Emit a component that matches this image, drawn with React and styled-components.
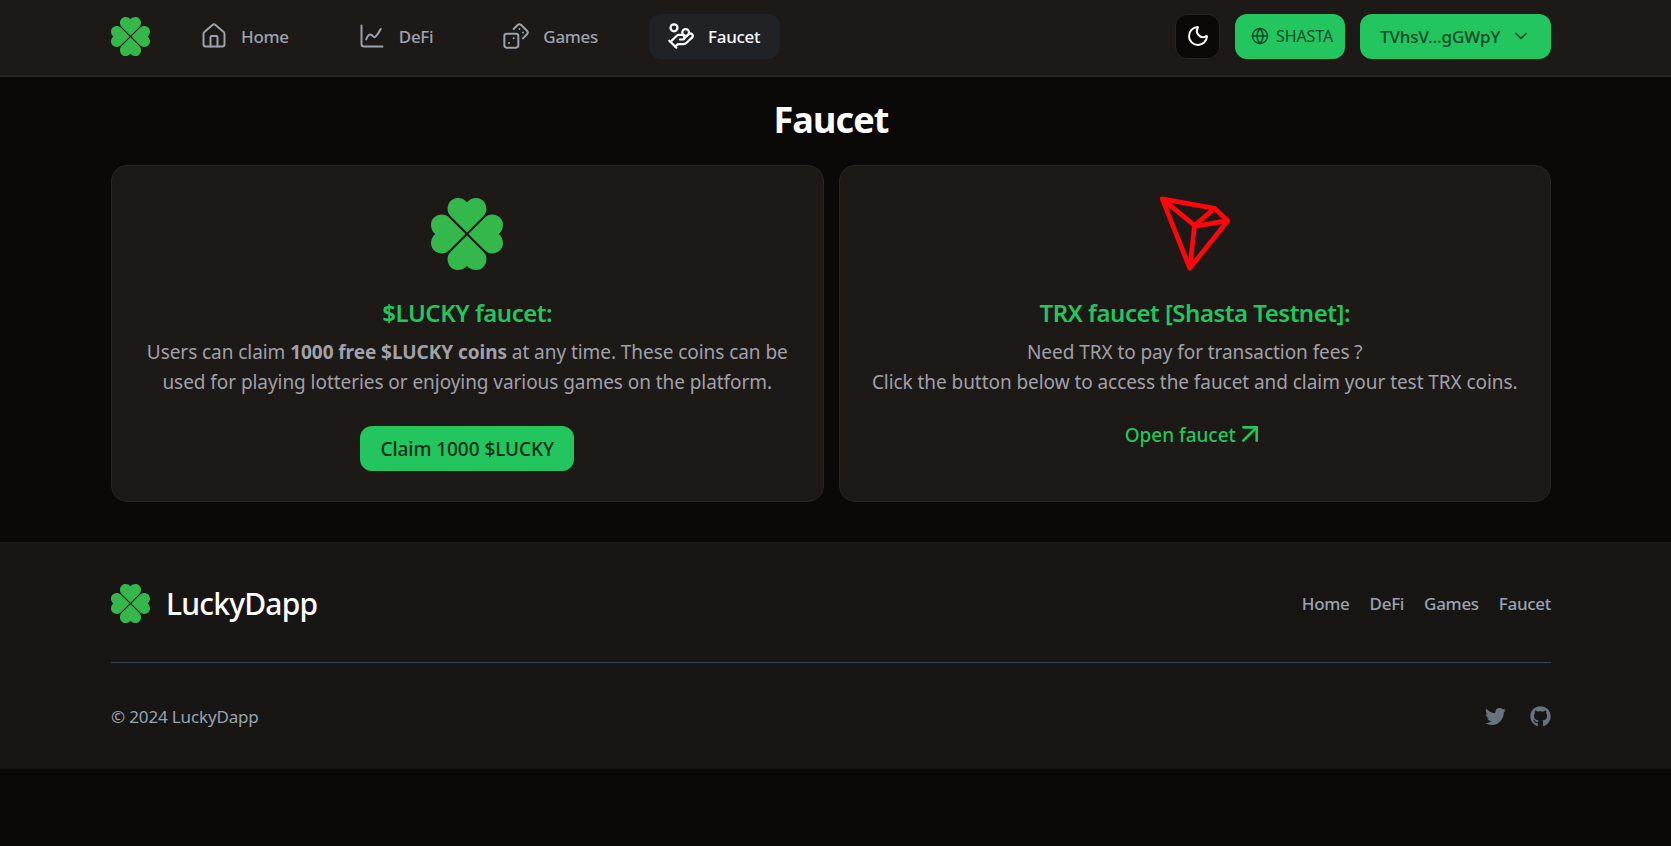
import React from 'react';
import styled, {createGlobalStyle} from 'styled-components';
import {House, Dices, HandCoins, Moon, Globe, ChevronDown, ArrowUpRight} from 'lucide-react';
import {FaTwitter, FaGithub} from 'react-icons/fa';

const GlobalStyle = createGlobalStyle`
  html, body {
    margin: 0;
    padding: 0;
    background: #0a0908;
    font-family: "Noto Sans", "Open Sans", sans-serif;
  }
  * { box-sizing: border-box; }
`;

const Page = styled.div`
  min-height: 846px;
  background: #0a0908;
  display: flex;
  flex-direction: column;
`;

const Container = styled.div`
  width: 1440px;
  margin-left: 111px;
`;

const Header = styled.header`
  height: 77px;
  background: #1c1917;
  border-bottom: 2px solid #292524;
`;

const HeaderRow = styled(Container)`
  height: 72px;
  display: flex;
  align-items: center;
  justify-content: space-between;
`;

const NavLeft = styled.nav`
  display: flex;
  align-items: center;
`;

const NavList = styled.div`
  display: flex;
  align-items: center;
  margin-left: 32px;
  gap: 31px;
`;

const NavItem = styled.a`
  display: flex;
  align-items: center;
  gap: 13px;
  height: 45px;
  padding: 0 20px 0 18px;
  border-radius: 12px;
  font-size: 17px;
  font-weight: 500;
  letter-spacing: -0.3px;
  color: ${p => (p.$active ? '#fff' : '#9ca3af')};
  background: ${p => (p.$active ? '#212225' : 'transparent')};
`;

const Actions = styled.div`
  display: flex;
  align-items: center;
  gap: 15px;
`;

const ThemeButton = styled.button`
  width: 45px;
  height: 45px;
  display: flex;
  align-items: center;
  justify-content: center;
  background: #0a0908;
  border: 1px solid #292524;
  border-radius: 12px;
  color: #fff;
  padding: 0;
`;

const GreenButton = styled.button`
  display: flex;
  align-items: center;
  height: 45px;
  border: 0;
  border-radius: 12px;
  background: #22c55e;
  color: #0f4a2a;
  font-family: inherit;
`;

const NetworkButton = styled(GreenButton)`
  width: 110px;
  padding: 0 0 0 16px;
  gap: 7px;
  font-size: 16px;
  letter-spacing: -0.1px;
`;

const WalletButton = styled(GreenButton)`
  width: 191px;
  padding: 0 0 0 20px;
  gap: 11px;
  font-size: 17px;
  font-weight: 500;
  letter-spacing: -0.1px;
`;

const Main = styled(Container)`
  padding-bottom: 40px;
`;

const Title = styled.h1`
  margin: 0;
  height: 88px;
  line-height: 86px;
  text-align: center;
  color: #fff;
  font-size: 36px;
  font-weight: 700;
  letter-spacing: -0.9px;
`;

const CardGrid = styled.div`
  display: grid;
  grid-template-columns: 1fr 1fr;
  gap: 15px;
`;

const Card = styled.section`
  height: 337px;
  padding: 28px 16px 0;
  background: #1c1917;
  border: 1px solid #292524;
  border-radius: 16px;
  display: flex;
  flex-direction: column;
  align-items: center;
  text-align: center;
`;

const IconSlot = styled.div`
  height: 80px;
  display: flex;
  align-items: center;
  justify-content: center;
`;

const CardTitle = styled.h2`
  margin: 23px 0 0;
  color: #22c55e;
  font-size: 24px;
  line-height: 32px;
  font-weight: 600;
  letter-spacing: -0.5px;
`;

const CardText = styled.p`
  margin: 8px 0 0;
  color: #a1a1aa;
  font-size: 19px;
  line-height: 30px;
  letter-spacing: -0.06px;
  strong { font-weight: 700; }
`;

const ClaimButton = styled(GreenButton)`
  margin-top: 29px;
  padding: 0 20px 0;
  font-size: 19px;
  font-weight: 500;
  color: #052e16;
  letter-spacing: -0.05px;
`;

const FaucetLink = styled.a`
  margin-top: 23px;
  display: flex;
  align-items: center;
  color: #22c55e;
  font-size: 19px;
  line-height: 30px;
  font-weight: 500;
  letter-spacing: -0.05px;
`;

const LinkArrow = styled(ArrowUpRight)`
  margin: -4px -1px -2px -2px;
`;

const Footer = styled.footer`
  height: 227px;
  background: #171615;
`;

const FooterTop = styled.div`
  height: 121px;
  padding-top: 3px;
  display: flex;
  align-items: center;
  justify-content: space-between;
  border-bottom: 1px solid #374151;
`;

const Brand = styled.div`
  display: flex;
  align-items: center;
  gap: 16px;
  color: #fff;
  font-size: 30px;
  font-weight: 500;
  letter-spacing: -0.8px;
`;

const FooterLinks = styled.div`
  display: flex;
  gap: 20px;
  font-size: 17px;
  font-weight: 500;
  letter-spacing: -0.3px;
  color: #9ca3af;
`;

const FooterBottom = styled.div`
  height: 106px;
  display: flex;
  align-items: center;
  justify-content: space-between;
`;

const Copyright = styled.span`
  color: #9ca3af;
  font-size: 17px;
  letter-spacing: -0.15px;
`;

const Socials = styled.div`
  display: flex;
  align-items: center;
  gap: 24px;
  color: #6b7280;
`;

function Clover({size}) {
  const leaf = 'M50 48 L28 26 C24 22 23 19 23 15 C23 7 29 0 37 0 C42 0 47 2 50 6 C53 2 58 0 63 0 C71 0 77 7 77 15 C77 19 76 22 72 26 Z';
  return (
    <svg width={size} height={size} viewBox="0 0 100 100">
      {[0, 90, 180, 270].map(a => (
        <path key={a} d={leaf} fill="#34b84b" transform={`rotate(${a} 50 50)`}/>
      ))}
    </svg>
  );
}

function TronLogo() {
  return (
    <svg width="72" height="76" viewBox="0 0 75 80" fill="none" stroke="#ff060a" strokeWidth="5" strokeLinejoin="round">
      <path d="M3 3 L58 13 L72 26 L32 76 Z"/>
      <path d="M3 3 L37 31 L32 76"/>
      <path d="M37 31 L58 13"/>
      <path d="M37 32 L72 26"/>
    </svg>
  );
}

function ChartIcon({size}) {
  return (
    <svg width={size} height={size} viewBox="0 0 24 24" fill="none" stroke="currentColor" strokeWidth="1.7" strokeLinecap="round" strokeLinejoin="round">
      <path d="M3 3v16a2 2 0 0 0 2 2h16"/>
      <path d="M7 15c1.500-4 3-5 4.500-4s2 3 3.500 1.500S18 9 19.500 6"/>
    </svg>
  );
}

const HomeIcon = ({size}) => <House size={size} strokeWidth={1.7}/>;
const DiceIcon = ({size}) => <Dices size={size} strokeWidth={1.7}/>;
const HandIcon = ({size}) => <HandCoins size={size} strokeWidth={1.9}/>;

const navItems = [
  {label: 'Home', Icon: HomeIcon},
  {label: 'DeFi', Icon: ChartIcon},
  {label: 'Games', Icon: DiceIcon},
  {label: 'Faucet', Icon: HandIcon, active: true},
];

export default function App() {
  return (
    <Page>
      <GlobalStyle/>
      <Header>
        <HeaderRow>
          <NavLeft>
            <Clover size={39}/>
            <NavList>
              {navItems.map(({label, Icon, active}) => (
                <NavItem key={label} $active={active}>
                  <Icon size={28}/>
                  {label}
                </NavItem>
              ))}
            </NavList>
          </NavLeft>
          <Actions>
            <ThemeButton><Moon size={24}/></ThemeButton>
            <NetworkButton><Globe size={18}/>SHASTA</NetworkButton>
            <WalletButton>TVhsV...gGWpY<ChevronDown size={20}/></WalletButton>
          </Actions>
        </HeaderRow>
      </Header>
      <Main>
        <Title>Faucet</Title>
        <CardGrid>
          <Card>
            <IconSlot><Clover size={72}/></IconSlot>
            <CardTitle>$LUCKY faucet:</CardTitle>
            <CardText>
              Users can claim <strong>1000 free $LUCKY coins</strong> at any time. These coins can be<br/>
              used for playing lotteries or enjoying various games on the platform.
            </CardText>
            <ClaimButton>Claim 1000 $LUCKY</ClaimButton>
          </Card>
          <Card>
            <IconSlot><TronLogo/></IconSlot>
            <CardTitle>TRX faucet [Shasta Testnet]:</CardTitle>
            <CardText>
              Need TRX to pay for transaction fees ?<br/>
              Click the button below to access the faucet and claim your test TRX coins.
            </CardText>
            <FaucetLink>Open faucet<LinkArrow size={32} strokeWidth={2}/></FaucetLink>
          </Card>
        </CardGrid>
      </Main>
      <Footer>
        <Container>
          <FooterTop>
            <Brand><Clover size={39}/>LuckyDapp</Brand>
            <FooterLinks>
              <span>Home</span><span>DeFi</span><span>Games</span><span>Faucet</span>
            </FooterLinks>
          </FooterTop>
          <FooterBottom>
            <Copyright>© 2024 LuckyDapp</Copyright>
            <Socials><FaTwitter size={21}/><FaGithub size={21}/></Socials>
          </FooterBottom>
        </Container>
      </Footer>
    </Page>
  );
}
